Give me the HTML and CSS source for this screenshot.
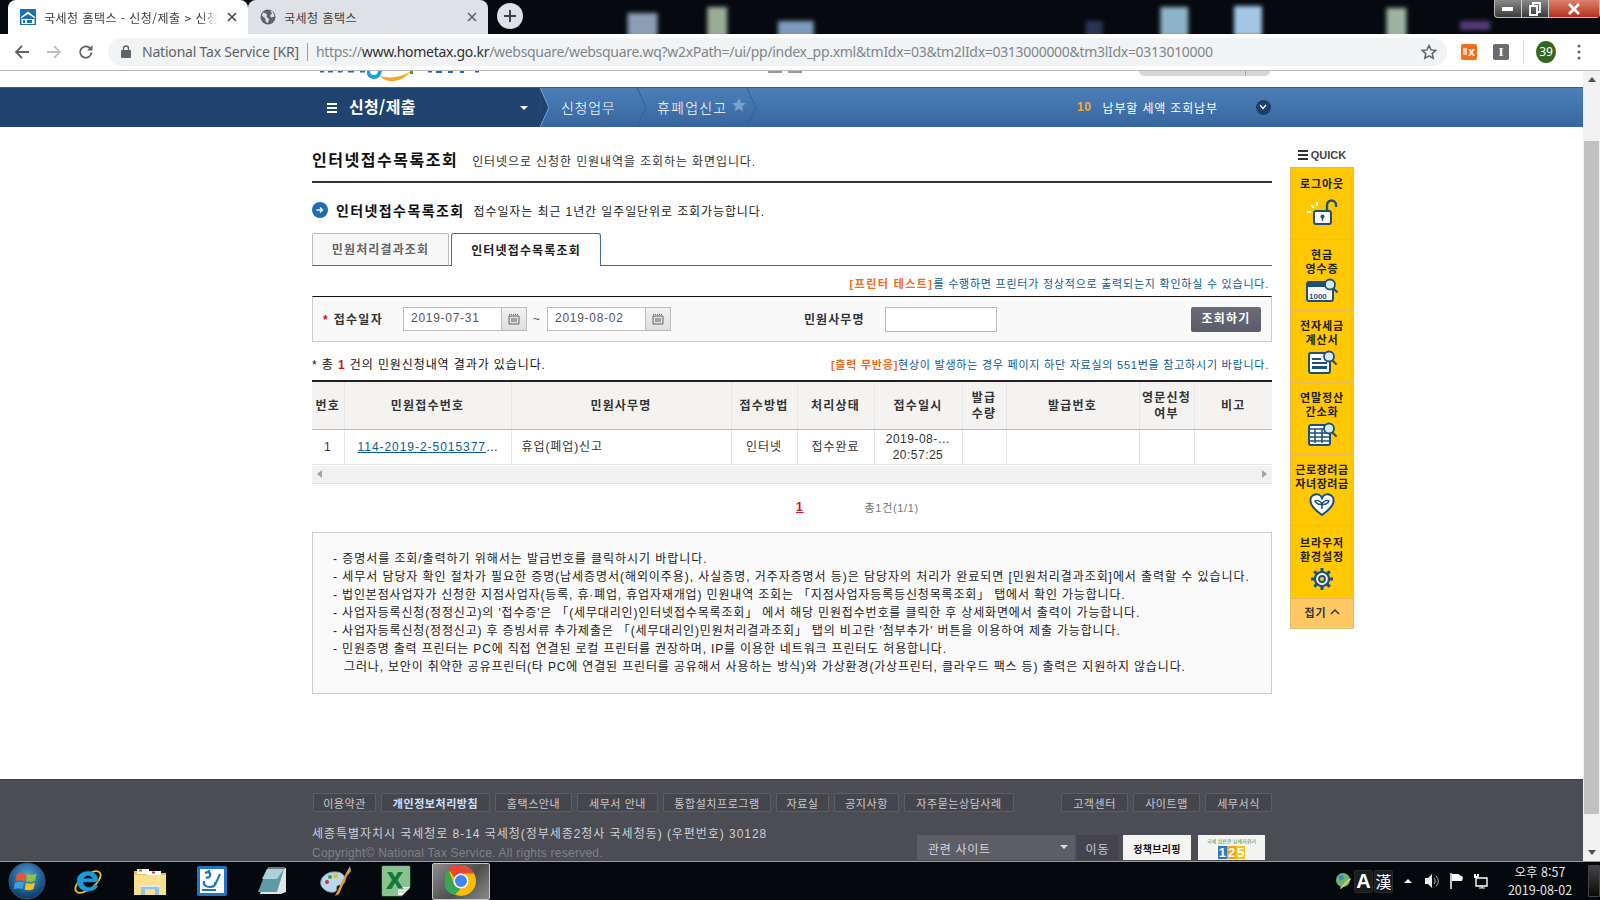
FILE: index.html
```html
<!DOCTYPE html>
<html lang="ko">
<head>
<meta charset="utf-8">
<title>국세청 홈택스 - 신청/제출</title>
<link rel="stylesheet" href="styles.css">
</head>
<body>
<header class="tabstrip">
  <div class="tab tab-active">
    <svg class="fav" viewBox="0 0 16 16"><rect width="16" height="16" fill="#1c6fb5"/><path d="M1 8 8 2.500 15 8v1.500L8 5 1 9.500z" fill="#fff"/><rect x="1.500" y="10" width="13" height="5" fill="#fff"/><rect x="3" y="11" width="2" height="3" fill="#1c6fb5"/><rect x="7" y="11" width="5" height="3" fill="#1c6fb5"/></svg>
    <span class="tab-title tab-fade">국세청 홈택스 - 신청/제출 &gt; 신청</span>
    <svg class="tab-x" viewBox="0 0 10 10"><path d="M1 1l8 8M9 1l-8 8" stroke="#45474a" stroke-width="1.600"/></svg>
  </div>
  <div class="tab tab-idle">
    <svg class="fav" viewBox="0 0 16 16"><circle cx="8" cy="8" r="7.500" fill="#5f6368"/><path d="M3 3.500 7 5 6.500 8 9 10l-1 4-2-1-1-4-3-2zM10 1.500l2 3-2 2 1 2 3.500-1L13 3z" fill="#dee1e6"/></svg>
    <span class="tab-title">국세청 홈택스</span>
    <svg class="tab-x" viewBox="0 0 10 10"><path d="M1 1l8 8M9 1l-8 8" stroke="#5f6368" stroke-width="1.600"/></svg>
  </div>
  <div class="newtab"><svg viewBox="0 0 14 14" width="14" height="14"><path d="M7 1v12M1 7h12" stroke="#3c4043" stroke-width="2"/></svg></div>
  <svg class="desktop" viewBox="0 0 975 34" preserveAspectRatio="none">
    <defs><filter id="bl" x="-30%" y="-30%" width="160%" height="160%"><feGaussianBlur stdDeviation="2.200"/></filter></defs>
    <g filter="url(#bl)">
      <rect x="105" y="13" width="30" height="24" fill="#8c9db6"/>
      <rect x="185" y="7" width="20" height="30" fill="#9aab96"/>
      <rect x="256" y="21" width="36" height="16" fill="#7f9cc0"/>
      <rect x="565" y="21" width="17" height="16" fill="#2c3455"/>
      <rect x="640" y="7" width="28" height="30" fill="#8db4c8"/>
      <rect x="714" y="6" width="28" height="30" fill="#a4c7e8"/>
      <rect x="867" y="8" width="20" height="30" fill="#9fb3a2"/>
      <rect x="941" y="21" width="30" height="9" fill="#553a7a"/>
    </g>
  </svg>
  <div class="winctl">
    <span class="wc"><svg viewBox="0 0 12 6" width="12" height="6"><rect width="11" height="4" y="1" fill="#fff"/></svg></span>
    <span class="wc"><svg viewBox="0 0 12 14" width="12" height="14"><path d="M1 4h7v9H1zM4 4V1h7v9H8" fill="none" stroke="#fff" stroke-width="1.800"/></svg></span>
    <span class="wc wc-close"><svg viewBox="0 0 12 12" width="12" height="12"><path d="M1 1l10 10M11 1 1 11" stroke="#fff" stroke-width="2.800"/></svg></span>
  </div>
</header>

<nav class="toolbar">
  <svg class="tb-ic" viewBox="0 0 16 16"><path d="M15 8H2M8 2 2 8l6 6" fill="none" stroke="#5f6368" stroke-width="1.800"/></svg>
  <svg class="tb-ic" viewBox="0 0 16 16"><path d="M1 8h13M8 2l6 6-6 6" fill="none" stroke="#bdc1c6" stroke-width="1.800"/></svg>
  <svg class="tb-ic" viewBox="0 0 16 16"><path d="M13.500 8.500A5.700 5.700 0 1 1 12 4.200" fill="none" stroke="#5f6368" stroke-width="1.800"/><path d="M14.500 1v5.500H9z" fill="#5f6368"/></svg>
  <div class="omni">
    <svg class="lock" viewBox="0 0 10 13"><path d="M2.500 5V3.500a2.500 2.500 0 0 1 5 0V5" fill="none" stroke="#5f6368" stroke-width="1.300"/><rect y="5" width="10" height="8" rx="1" fill="#5f6368"/></svg>
    <span class="site">National Tax Service [KR]</span>
    <i class="omni-sep"></i>
    <span class="url">https://<span class="url-host">www.hometax.go.kr</span>/websquare/websquare.wq?w2xPath=/ui/pp/index_pp.xml&amp;tmIdx=03&amp;tm2lIdx=0313000000&amp;tm3lIdx=0313010000</span>
    <svg class="omni-star" viewBox="0 0 16 16"><path d="M8 1.500l2 4.400 4.800.5-3.600 3.200 1 4.700L8 11.900l-4.200 2.400 1-4.700L1.200 6.400 6 5.900z" fill="none" stroke="#5f6368" stroke-width="1.500"/></svg>
  </div>
  <div class="ext ext-o"><i class="ext-bar"></i><b>x</b></div>
  <div class="ext ext-i">I</div>
  <i class="tb-sep"></i>
  <div class="avatar">39</div>
  <svg class="menu" viewBox="0 0 4 16"><circle cx="2" cy="2" r="1.500" fill="#5f6368"/><circle cx="2" cy="8" r="1.500" fill="#5f6368"/><circle cx="2" cy="14" r="1.500" fill="#5f6368"/></svg>
</nav>

<div class="viewport">
  <div class="page">
    <div class="logo-strip">
      <svg class="logo-cut" viewBox="0 0 170 16">
        <path d="M0 0h4v1.500H0zM8 0h5v1.500H8zM18 0h5l-1 1.500h-4zM28 0h6v1.500h-6zM40 0h5v1.500h-5zM108 0h4v1.500h-4zM116 0h6v2h-6zM128 0h5v2h-5zM140 0h4v2h-4zM155 0h4v1.500h-4z" fill="#1f6db3"/>
        <path d="M47 0c-1 5 3 8 7 8s7-3 8-8h-4c0 3-2 4-4 4s-4-1-4-4z" fill="#18a0d8"/>
        <path d="M60 5c6 8 22 7 31-5-9 6-20 8-31 5z" fill="#f6a623"/>
        <rect x="90" y="0" width="3" height="3" fill="#3ca33c"/>
      </svg>
      <span class="logo-mid"><i></i><i></i></span>
      <span class="logo-pill"><i></i></span>
    </div>
    <div class="gnb">
      <div class="gnb-cur">
        <span class="burger"><i></i><i></i><i></i></span>
        <strong>신청/제출</strong>
        <i class="caret"></i>
      </div>
      <svg class="chev" viewBox="0 0 10 40"><path d="M0 0 9 20 0 40z" fill="#20436f"/><path d="M0 0 9 20 0 40" fill="none" stroke="#7ba3d2"/></svg>
      <div class="crumb crumb-1">신청업무</div>
      <svg class="chev" viewBox="0 0 10 40"><path d="M0 0 9 20 0 40" fill="none" stroke="#2f5e99"/></svg>
      <div class="crumb crumb-2">휴폐업신고<svg viewBox="0 0 14 14" width="14" height="14"><path d="M7 0l2 4.800 5 .4-3.800 3.300 1.200 5L7 10.800l-4.400 2.700 1.200-5L0 5.200l5-.4z" fill="#7ba0cc"/></svg></div>
      <svg class="chev" viewBox="0 0 10 40"><path d="M0 0 9 20 0 40" fill="none" stroke="#2f5e99"/></svg>
      <div class="pay"><b>10</b><span>납부할 세액 조회납부</span><em><svg viewBox="0 0 8 6" width="8" height="6"><path d="M1 1l3 3.500L7 1" fill="none" stroke="#fff" stroke-width="1.200"/></svg></em></div>
    </div>

    <main class="layout">
      <section class="content">
        <div class="page-head"><h1>인터넷접수목록조회</h1><p>인터넷으로 신청한 민원내역을 조회하는 화면입니다.</p></div>
        <div class="sec-head">
          <svg class="sec-ic" viewBox="0 0 16 16"><circle cx="8" cy="8" r="8" fill="#1f6cb0"/><path d="M4.500 8h6M8 5.500 10.500 8 8 10.500" fill="none" stroke="#fff" stroke-width="1.400"/></svg>
          <h2>인터넷접수목록조회</h2><p>접수일자는 최근 1년간 일주일단위로 조회가능합니다.</p>
        </div>
        <div class="tabs"><span class="t t-off">민원처리결과조회</span><span class="t t-on">인터넷접수목록조회</span></div>
        <p class="hint hint-top"><b>[프린터 테스트]</b>를 수행하면 프린터가 정상적으로 출력되는지 확인하실 수 있습니다.</p>
        <form class="search">
          <label class="lb lb-date"><i>*</i> 접수일자</label>
          <span class="date">2019-07-31</span>
          <span class="cal"><svg viewBox="0 0 12 12" width="12" height="12"><path d="M1 3h10v8H1z" fill="#ddd" stroke="#666"/><path d="M1 1.500h10" stroke="#666" stroke-dasharray="1 1"/><path d="M3 6h6M3 8h6" stroke="#666"/></svg></span>
          <span class="tilde">~</span>
          <span class="date">2019-08-02</span>
          <span class="cal"><svg viewBox="0 0 12 12" width="12" height="12"><path d="M1 3h10v8H1z" fill="#ddd" stroke="#666"/><path d="M1 1.500h10" stroke="#666" stroke-dasharray="1 1"/><path d="M3 6h6M3 8h6" stroke="#666"/></svg></span>
          <label class="lb lb-name">민원사무명</label>
          <span class="name-in"></span>
          <span class="btn">조회하기</span>
        </form>
        <div class="result">
          <p>* 총 <b>1</b> 건의 민원신청내역 결과가 있습니다.</p>
          <p class="hint"><b>[출력 무반응]</b>현상이 발생하는 경우 페이지 하단 자료실의 551번을 참고하시기 바랍니다.</p>
        </div>
        <table class="grid">
          <colgroup><col class="c1"><col class="c2"><col class="c3"><col class="c4"><col class="c5"><col class="c6"><col class="c7"><col class="c8"><col class="c9"><col class="c10"></colgroup>
          <thead><tr><th>번호</th><th>민원접수번호</th><th>민원사무명</th><th>접수방법</th><th>처리상태</th><th>접수일시</th><th>발급<br>수량</th><th>발급번호</th><th>영문신청<br>여부</th><th>비고</th></tr></thead>
          <tbody><tr><td>1</td><td class="td-link"><a>114-2019-2-5015377</a>…</td><td class="td-left">휴업(폐업)신고</td><td>인터넷</td><td>접수완료</td><td class="td-date">2019-08-…<br>20:57:25</td><td></td><td></td><td></td><td></td></tr></tbody>
        </table>
        <div class="hscroll"><i class="ar ar-l"></i><i class="ar ar-r"></i></div>
        <div class="pager"><a>1</a><span>총1건(1/1)</span></div>
        <div class="notes">
          <p class="loose">- 증명서를 조회/출력하기 위해서는 발급번호를 클릭하시기 바랍니다.</p>
          <p class="loose">- 세무서 담당자 확인 절차가 필요한 증명(납세증명서(해외이주용), 사실증명, 거주자증명서 등)은 담당자의 처리가 완료되면 [민원처리결과조회]에서 출력할 수 있습니다.</p>
          <p>- 법인본점사업자가 신청한 지점사업자(등록, 휴·폐업, 휴업자재개업) 민원내역 조회는 「지점사업자등록등신청목록조회」 탭에서 확인 가능합니다.</p>
          <p>- 사업자등록신청(정정신고)의 '접수증'은 「(세무대리인)인터넷접수목록조회」 에서 해당 민원접수번호를 클릭한 후 상세화면에서 출력이 가능합니다.</p>
          <p>- 사업자등록신청(정정신고) 후 증빙서류 추가제출은 「(세무대리인)민원처리결과조회」 탭의 비고란 '첨부추가' 버튼을 이용하여 제출 가능합니다.</p>
          <p>- 민원증명 출력 프린터는 PC에 직접 연결된 로컬 프린터를 권장하며, IP를 이용한 네트워크 프린터도 허용합니다.</p>
          <p class="indent">그러나, 보안이 취약한 공유프린터(타 PC에 연결된 프린터를 공유해서 사용하는 방식)와 가상환경(가상프린터, 클라우드 팩스 등) 출력은 지원하지 않습니다.</p>
        </div>
      </section>

      <aside class="quick">
        <div class="quick-h"><span class="burger burger-d"><i></i><i></i><i></i></span>QUICK</div>
        <div class="q q-first"><span>로그아웃</span>
          <svg viewBox="0 0 32 26" width="32" height="26"><path d="M1 13h4M5 6l3 3M11 3v4" stroke="#fff" stroke-width="2"/><path d="M21 12V6a4.500 4.500 0 0 1 9 0v2" fill="none" stroke="#1c4f7c" stroke-width="2.400"/><rect x="8" y="12" width="17" height="13" rx="2" fill="#fff" stroke="#1c4f7c" stroke-width="2"/><circle cx="16.500" cy="17.500" r="2" fill="#1c4f7c"/><path d="M16.500 18v4" stroke="#1c4f7c" stroke-width="1.400"/></svg>
        </div>
        <div class="q"><span>현금<br>영수증</span>
          <svg viewBox="0 0 32 24" width="32" height="24"><rect x="1" y="4" width="26" height="19" rx="2" fill="#fff" stroke="#1c4f7c" stroke-width="2"/><rect x="1" y="4" width="26" height="5" fill="#1c4f7c"/><text x="3" y="20.500" class="svgt">1000</text><circle cx="24" cy="6.500" r="5" fill="#dbe9f3" stroke="#1c4f7c" stroke-width="1.800"/><path d="M27.500 10.500l4 4" stroke="#1c4f7c" stroke-width="2"/></svg>
        </div>
        <div class="q"><span>전자세금<br>계산서</span>
          <svg viewBox="0 0 32 24" width="32" height="24"><rect x="3" y="3" width="21" height="20" rx="2" fill="#fff" stroke="#1c4f7c" stroke-width="2"/><path d="M6 8h9v2H6zM6 12h15v2H6zM6 16h15v3H6z" fill="#1c4f7c"/><circle cx="23" cy="6.500" r="5" fill="#dbe9f3" stroke="#1c4f7c" stroke-width="1.800"/><path d="M26.500 10.500l4 4" stroke="#1c4f7c" stroke-width="2"/></svg>
        </div>
        <div class="q"><span>연말정산<br>간소화</span>
          <svg viewBox="0 0 32 24" width="32" height="24"><rect x="3" y="3" width="21" height="20" rx="2" fill="#fff" stroke="#1c4f7c" stroke-width="2"/><path d="M3 7h21M3 11h21M3 15h21M3 19h21M9 7v14M16 7v14" stroke="#1c4f7c" stroke-width="1.500"/><circle cx="23" cy="6.500" r="5" fill="#dbe9f3" stroke="#1c4f7c" stroke-width="1.800"/><path d="M26.500 10.500l4 4" stroke="#1c4f7c" stroke-width="2"/></svg>
        </div>
        <div class="q"><span class="wide">근로장려금<br>자녀장려금</span>
          <svg viewBox="0 0 26 24" width="26" height="24"><path d="M13 22C6 17 1.500 13 1.500 8A6 6 0 0 1 13 5a6 6 0 0 1 11.500 3c0 5-4.500 9-11.500 14z" fill="#fff" stroke="#1c4f7c" stroke-width="2"/><path d="M13 16V9M13 11C11 7 7 7 6 8c1 3 5 4 7 3zM13 11c2-4 6-4 7-3-1 3-5 4-7 3z" fill="none" stroke="#1c4f7c" stroke-width="1.500"/></svg>
        </div>
        <div class="q q-last"><span>브라우저<br>환경설정</span>
          <svg viewBox="0 0 24 24" width="24" height="24"><circle cx="12" cy="12" r="7" fill="#fff" stroke="#1c4f7c" stroke-width="2.200"/><circle cx="12" cy="12" r="3" fill="#ffc800" stroke="#1c4f7c" stroke-width="1.800"/><path d="M12 1v5M12 18v5M1 12h5M18 12h5M4.200 4.200l3.500 3.500M16.300 16.300l3.500 3.500M4.200 19.800l3.500-3.500M16.300 7.700l3.500-3.500" stroke="#1c4f7c" stroke-width="3"/></svg>
        </div>
        <div class="q-fold">접기 <svg viewBox="0 0 10 6" width="10" height="6"><path d="M1 5l4-4 4 4" fill="none" stroke="#333" stroke-width="1.400"/></svg></div>
      </aside>
    </main>

    <footer class="foot">
      <div class="foot-links">
        <a>이용약관</a><a class="hl">개인정보처리방침</a><a>홈택스안내</a><a>세무서 안내</a><a>통합설치프로그램</a><a>자료실</a><a>공지사항</a><a>자주묻는상담사례</a><i></i><a>고객센터</a><a>사이트맵</a><a>세무서식</a>
      </div>
      <div class="foot-row">
        <div class="foot-txt">
          <p>세종특별자치시 국세청로 8-14 국세청(정부세종2청사 국세청동) (우편번호) 30128</p>
          <p class="copy">Copyright© National Tax Service.  All rights reserved.</p>
        </div>
        <div class="foot-r">
          <span class="sel">관련 사이트<i class="caret caret-g"></i></span>
          <span class="go">이동</span>
          <span class="ban ban-1">정책브리핑</span>
          <span class="ban ban-2"><small>국세 심판관·납세자권리</small><b><u>1</u><u>2</u><u>5</u></b></span>
        </div>
      </div>
    </footer>
  </div>
  <div class="vscroll">
    <i class="vs-up"></i>
    <div class="vs-track"><i class="vs-thumb"></i></div>
    <i class="vs-down"></i>
  </div>
</div>

<footer class="taskbar">
  <span class="tk tk-orb"><svg viewBox="0 0 38 38" width="38" height="38"><defs><radialGradient id="orb" cx=".5" cy=".35" r=".7"><stop offset="0" stop-color="#5f9fd0"/><stop offset=".6" stop-color="#1d5f95"/><stop offset="1" stop-color="#0b2c4c"/></radialGradient></defs><circle cx="19" cy="19" r="18" fill="url(#orb)" stroke="#3a5a70"/><path d="M9 12c3-2 6-1 9 0l-1.500 7c-3-1-5-1-9 0z" fill="#e8562e"/><path d="M19.500 12c3 1 6 1 9-.5L27 18.500c-3 1.500-6 1.500-9 .5z" fill="#8cc63f"/><path d="M7 20.500c3-1 6-1 9 0L14.500 27c-3-1-6-1-9 .5z" fill="#3ca0e0"/><path d="M18 21c3 1 6 1 9-.5L25.500 27c-3 1.500-6 1.500-9 .5z" fill="#f7c21b"/></svg></span>
  <span class="tk"><svg viewBox="0 0 32 32" width="32" height="32"><ellipse cx="15" cy="17" rx="15" ry="7" transform="rotate(-38 15 17)" fill="none" stroke="#f5c518" stroke-width="1.800"/><path d="M25 17H10c.5 6 8 7 12 3l3 1c-4 8-21 7-21-5 0-11 16-13 20-5 1 2 1 4 1 6zM10.500 13.500h9c-1-4-8-4-9 0z" fill="#1e9ae0" stroke="#0e6eb5" stroke-width=".6"/></svg></span>
  <span class="tk"><svg viewBox="0 0 34 32" width="34" height="32"><path d="M1 6h10l2 2h20v22H1z" fill="#e6c35c"/><rect x="4" y="4" width="12" height="5" fill="#fff"/><rect x="6" y="4.500" width="3" height="2" fill="#3ca33c"/><rect x="14" y="6" width="14" height="4" fill="#fff"/><rect x="19" y="6.500" width="3" height="2" fill="#c33"/><path d="M1 10h32v20H1z" fill="#f7e18e"/><path d="M8 30V20h18v10h-4v-6H12v6z" fill="#8ec4e6"/><path d="M7 20h20v2H7z" fill="#d2ecf9"/></svg></span>
  <span class="tk"><svg viewBox="0 0 30 30" width="30" height="30"><rect width="30" height="30" rx="2" fill="#1f74c4"/><rect x="3" y="3" width="24" height="24" fill="#fff"/><path d="M8 7c4-2 6 0 5 3-1 2-3 2-4 1M7 15c-1 4 2 6 6 6s6-2 5-5M5 24h14M12 4v3" fill="none" stroke="#1f74c4" stroke-width="2.200"/><path d="M23 8l-5 11" stroke="#1f74c4" stroke-width="2"/></svg></span>
  <span class="tk"><svg viewBox="0 0 32 32" width="32" height="32"><path d="M11 3h18v24l-5 2H3z" fill="#dfe6e6"/><path d="M10 4h17L20 27H1z" fill="#5d9aa6"/><path d="M11 2h17v2H11z" fill="#777" stroke-dasharray="1 1"/><path d="M10 4h17l-7 10H5z" fill="#a8d3da"/></svg></span>
  <span class="tk"><svg viewBox="0 0 34 34" width="34" height="34"><path d="M3 21C1 13 10 7 18 8c8 0 11 7 8 11-2 3-5 1-7 3-1 2 1 5-3 6-5 1-11-2-13-7z" fill="#b9d7ec" stroke="#7aa5c4"/><circle cx="9" cy="18" r="2" fill="#c33"/><circle cx="12" cy="13" r="2" fill="#3ca33c"/><circle cx="18" cy="12" r="2.200" fill="#f2b705"/><path d="M17 32 28 9l2 1-9 20z" fill="#e8952c"/><path d="M28 9l4-7 1 5-3 4z" fill="#c9a060"/></svg></span>
  <span class="tk"><svg viewBox="0 0 30 32" width="30" height="32"><path d="M1 1h28v22l-8 8H1z" fill="#fff" stroke="#1d7040"/><path d="M2 2h26v20H17v8H2z" fill="#8ac28f"/><path d="M6 7h5l3 5 3-5h5l-5.500 8 6 9h-5l-3.500-6-3.500 6H5l6-9z" fill="#137a3a"/><path d="M18 24h10M18 27h7" stroke="#8ac28f"/></svg></span>
  <span class="tk tk-chrome"><svg viewBox="0 0 32 32" width="32" height="32"><circle cx="16" cy="16" r="15" fill="#fbbc05"/><path d="M16 1a15 15 0 0 1 13 7.500H16a7.500 7.500 0 0 0-6.500 3.750L3 3.500A15 15 0 0 1 16 1z" fill="#ea4335"/><path d="M3 4.500 9.500 19.750a7.500 7.500 0 0 0 6.500 3.750L9.500 30A15 15 0 0 1 3 4.500z" fill="#34a853"/><circle cx="16" cy="16" r="7.500" fill="#fff"/><circle cx="16" cy="16" r="6" fill="#4285f4"/></svg></span>
  <div class="tray">
    <svg class="tr-globe" viewBox="0 0 16 16" width="16" height="16"><circle cx="8" cy="7" r="7" fill="#6bb76b"/><path d="M3 3l5-1 1 4-4 2z" fill="#3f87c4"/><path d="M5 15 15 5l1 1L6 16z" fill="#f5d76e"/></svg>
    <span class="ime">A</span><span class="ime ime-k">漢</span>
    <i class="tr-up"></i>
    <svg class="tr-ic" viewBox="0 0 16 16" width="16" height="16"><path d="M1 5h3l4-4v14l-4-4H1z" fill="#eee"/><path d="M10 5c1.500 1.500 1.500 4.500 0 6M12 3c3 3 3 7 0 10" fill="none" stroke="#bbb"/></svg>
    <svg class="tr-ic tr-flag" viewBox="0 0 16 16" width="16" height="16"><path d="M2 0v16" stroke="#fff" stroke-width="1.500"/><path d="M3 1h6l5 3-1 4H3z" fill="#fff"/></svg>
    <svg class="tr-ic tr-net" viewBox="0 0 16 16" width="16" height="16"><path d="M3 5h11v8H3z" fill="none" stroke="#fff" stroke-width="1.400"/><path d="M6 15h6M9 13v2" stroke="#fff"/><path d="M1 5h5V1H4v2H3V1H1z" fill="#fff"/></svg>
    <div class="clock"><span>오후 8:57</span><span>2019-08-02</span></div>
    <i class="showdesk"></i>
  </div>
</footer>
</body>
</html>
```

FILE: styles.css
```css
* { box-sizing: border-box; }
html, body { margin: 0; padding: 0; }
body {
  width: 1600px; height: 900px; overflow: hidden;
  display: flex; flex-direction: column;
  font-family: "Liberation Sans", "Noto Sans CJK KR", sans-serif;
  font-size: 12px; color: #222; background: #fff;
  letter-spacing: .075em;
}
p, h1, h2 { margin: 0; }
i, em { font-style: normal; }

/* browser chrome */
.tabstrip { height: 34px; flex: none; display: flex; background: #060a10; padding-left: 8px; letter-spacing: .04em; }
.tab { width: 240px; height: 34px; display: flex; align-items: center; padding: 0 11px 0 12px; border-radius: 8px 8px 0 0; font-family: "Noto Sans CJK KR", sans-serif; color: #3c4043; }
.tab-active { background: #fff; }
.tab-idle { background: #dee1e6; }
.fav { width: 16px; height: 16px; flex: none; margin-right: 8px; }
.tab-title { flex: 1; white-space: nowrap; overflow: hidden; }
.tab-fade { -webkit-mask-image: linear-gradient(90deg, #000 88%, transparent 97%); mask-image: linear-gradient(90deg, #000 88%, transparent 97%); }
.tab-x { width: 10px; height: 10px; flex: none; margin-left: 4px; }
.newtab { width: 26px; height: 26px; margin: 3px 0 0 9px; flex: none; border-radius: 50%; background: #dee1e6; display: flex; align-items: center; justify-content: center; }
.desktop { flex: 1; height: 34px; min-width: 0; }
.winctl { flex: none; width: 106px; height: 18px; display: flex; border: 1px solid #bbb; border-top: 0; border-radius: 0 0 4px 4px; background: linear-gradient(#8a8a8a, #3a3a3a); }
.wc { width: 27px; display: flex; align-items: center; justify-content: center; border-right: 1px solid #ccc; }
.wc-close { flex: 1; border: 0; background: linear-gradient(#d9826f, #b8301c); }

.toolbar { height: 37px; flex: none; display: flex; align-items: center; background: #fff; border-bottom: 1px solid #b9b9b9; padding-bottom: 1px; letter-spacing: 0; }
.tb-ic { width: 16px; height: 16px; flex: none; margin-left: 14px; margin-right: 1px; }
.tb-ic:nth-child(2) { margin-left: 15px; }
.tb-ic:nth-child(3) { margin-left: 15px; }
.omni { width: 1339px; height: 28px; margin-left: 13px; border-radius: 14px; background: #f1f3f4; display: flex; align-items: center; padding-left: 13px; font-family: "Noto Sans", sans-serif; font-size: 14px; color: #5f6368; }
.lock { width: 10px; height: 13px; flex: none; margin-right: 11px; }
.site { white-space: nowrap; letter-spacing: -.2px; }
.omni-sep { width: 1px; height: 18px; background: #9aa0a6; margin: 0 8px 0 8px; }
.url { white-space: nowrap; color: #80868b; flex: 1; letter-spacing: -.3px; }
.url-host { color: #303134; }
.omni-star { width: 16px; height: 16px; flex: none; margin-right: 10px; }
.ext { width: 16px; height: 16px; flex: none; border-radius: 2px; display: flex; align-items: center; justify-content: center; }
.ext-o { margin-left: 14px; background: #f4701f; color: #fff; font-size: 12px; line-height: 16px; }
.ext-bar { width: 4px; height: 7px; margin-right: 1px; background: #ffc9a0; display: block; }
.ext-i { margin-left: 16px; background: #6b6b6b; color: #fff; font-family: "Liberation Serif", serif; font-weight: 700; font-size: 13px; }
.tb-sep { width: 1px; height: 24px; background: #dadce0; margin-left: 14px; }
.avatar { width: 20px; height: 22px; margin-left: 12px; border-radius: 50%; background: #33691e; color: #fff; font-size: 12px; display: flex; align-items: center; justify-content: center; font-family: "Noto Sans", sans-serif; }
.menu { width: 4px; height: 16px; flex: none; margin-left: 21px; }

/* page */
.viewport { height: 790px; flex: none; display: flex; }
.page { width: 1583px; height: 790px; flex: none; display: flex; flex-direction: column; overflow: hidden; background: #fff; }
.vscroll { width: 17px; flex: none; display: flex; flex-direction: column; align-items: center; background: #f1f1f1; }
.vs-up, .vs-down { width: 17px; height: 17px; flex: none; display: flex; align-items: center; justify-content: center; }
.vs-up::after { content: ""; border: 4px solid transparent; border-bottom: 5px solid #505050; border-top: 0; }
.vs-down::after { content: ""; border: 4px solid transparent; border-top: 5px solid #505050; border-bottom: 0; }
.vs-track { flex: 1; width: 100%; padding-top: 53px; padding-bottom: 30px; display: flex; justify-content: center; }
.vs-thumb { width: 15px; background: #c1c1c1; display: block; }

.logo-strip { height: 16px; flex: none; padding-left: 320px; display: flex; }
.logo-cut { width: 170px; height: 16px; flex: none; }
.logo-mid { display: flex; gap: 6px; margin-left: 278px; }
.logo-mid i { width: 14px; height: 2px; background: #999; }
.logo-pill { width: 131px; height: 5px; margin-left: 337px; background: #d6d6d6; border-radius: 0 0 8px 8px; display: flex; justify-content: flex-end; }
.logo-pill i { width: 1px; background: #aaa; margin-right: 24px; }

.gnb { height: 40px; flex: none; display: flex; color: #fff; font-family: "Noto Sans CJK KR", sans-serif; background: linear-gradient(#4b7fb9, #38669f); letter-spacing: .06em; border-top: 1px solid #3b5f8c; }
.gnb-cur { width: 540px; flex: none; display: flex; align-items: center; padding-left: 327px; background: #20436f; }
.gnb-cur strong { font-size: 16px; font-weight: 700; margin-left: 12px; padding-bottom: 3px; letter-spacing: .02em; }
.burger { width: 10px; display: flex; flex-direction: column; gap: 2px; }
.burger i { height: 2px; background: #fff; display: block; }
.gnb-cur .caret { margin-left: auto; margin-right: 12px; }
.caret { width: 0; height: 0; border: 4px solid transparent; border-top: 4px solid #fff; border-bottom: 0; display: block; }
.chev { width: 10px; height: 39px; flex: none; }
.crumb { font-size: 14px; display: flex; align-items: center; font-weight: 300; padding-bottom: 2px; }
.crumb-1 { width: 87px; padding-left: 11px; }
.crumb-2 { width: 100px; padding-left: 10px; white-space: nowrap; letter-spacing: .085em; }
.crumb-2 svg { flex: none; margin-left: 5px; margin-bottom: 3px; }
.pay { flex: 1; display: flex; align-items: center; padding-left: 320px; font-size: 12px; padding-bottom: 1px; }
.pay b { color: #f7a736; font-family: "Liberation Sans", sans-serif; margin-right: 11px; letter-spacing: .05em; }
.pay span { letter-spacing: .07em; }
.pay em { width: 15px; height: 15px; margin-left: 38px; border-radius: 50%; background: #1f3f68; display: flex; align-items: center; justify-content: center; }

.layout { display: flex; padding-left: 312px; flex: none; }
.content { width: 960px; flex: none; }
.page-head { height: 56px; padding: 20px 0 11px; display: flex; align-items: center; border-bottom: 2px solid #333; }
.page-head h1 { font-size: 16px; font-weight: 700; color: #111; letter-spacing: .095em; margin-right: 14px; }
.page-head p { color: #333; padding-top: 3px; }
.sec-head { height: 26px; margin-top: 14px; display: flex; align-items: center; }
.sec-ic { width: 16px; height: 16px; flex: none; margin-right: 8px; }
.sec-head h2 { font-size: 14px; font-weight: 700; color: #111; letter-spacing: .1em; margin-right: 9px; }
.tabs { height: 33px; margin-top: 10px; display: flex; border-bottom: 1px solid #3f6fa8; font-weight: 700; letter-spacing: .095em; }
.t { display: flex; align-items: center; justify-content: center; height: 33px; padding-bottom: 2px; }
.t-off { width: 137px; background: #f7f7f7; color: #666; border: 1px solid #bbb; border-bottom: 1px solid #3f6fa8; border-radius: 2px 2px 0 0; }
.t-on { width: 150px; margin-left: 2px; background: #fff; color: #222; border: 1px solid #3f6fa8; border-bottom: 0; border-radius: 3px 3px 0 0; }
.hint { color: #0b5a93; text-align: right; padding-right: 3px; font-size: 11px; letter-spacing: .07em; }
.hint b { color: #ed6c1f; }
.hint-top b { letter-spacing: .13em; }
.hint-top { height: 30px; padding-top: 11px; line-height: 14px; }
.search { height: 46px; margin: 0; display: flex; align-items: center; background: #f9f9f9; border: 1px solid #ccc; border-top: 1px solid #111; }
.lb { font-weight: 700; color: #333; letter-spacing: .11em; padding-bottom: 2px; }
.lb i { color: #d0112b; }
.lb-date { width: 90px; padding-left: 10px; }
.date { width: 99px; height: 24px; background: #fff; border: 1px solid #bbb; color: #555; line-height: 21px; padding-left: 7px; letter-spacing: .06em; }
.cal { width: 25px; height: 24px; background: linear-gradient(#f2f2f2, #dedede); border: 1px solid #bbb; border-left: 0; display: flex; align-items: center; justify-content: center; }
.tilde { width: 20px; text-align: center; color: #555; }
.lb-name { width: 81px; margin-left: 133px; letter-spacing: .09em; }
.name-in { width: 112px; height: 25px; background: #fff; border: 1px solid #bbb; }
.btn { width: 70px; height: 25px; margin-left: 194px; border-radius: 2px; background: linear-gradient(#6a6d78, #5a5d68); color: #fff; font-weight: 700; display: flex; align-items: center; justify-content: center; letter-spacing: .1em; padding-bottom: 3px; }
.result { height: 38px; padding-top: 15px; line-height: 16px; display: flex; justify-content: space-between; }
.result b { color: #d0112b; }
.result .hint b { color: #ed6c1f; }
.result p:first-child { color: #111; }
.grid { width: 960px; table-layout: fixed; border-collapse: collapse; border-top: 2px solid #222; }
.c1 { width: 32px; } .c2 { width: 167px; } .c3 { width: 220px; } .c4 { width: 66px; } .c5 { width: 77px; }
.c6 { width: 88px; } .c7 { width: 44px; } .c8 { width: 133px; } .c9 { width: 55px; } .c10 { width: 78px; }
.grid th { height: 48px; background: #f4f3f2; font-weight: 700; color: #333; border-bottom: 1px solid #bbb; border-left: 1px solid #e6e6e6; padding: 2px 0 0; line-height: 16px; letter-spacing: .1em; }
.grid th:first-child, .grid td:first-child { border-left: 0; }
.grid td { height: 35px; text-align: center; color: #333; border-bottom: 1px solid #e5e5e5; border-left: 1px solid #e6e6e6; padding: 0; line-height: 16px; }
.grid .td-left { text-align: left; padding-left: 10px; }
.grid .td-link { text-align: left; padding-left: 13px; white-space: nowrap; overflow: hidden; }
.td-link a { color: #0b5a93; text-decoration: underline; letter-spacing: .08em; }
.grid .td-date { letter-spacing: .04em; }
.hscroll { height: 18px; margin-top: 1px; background: #f1f1f1; border-bottom: 1px solid #e2e2e2; display: flex; justify-content: space-between; align-items: center; padding: 0 5px; }
.ar { width: 0; height: 0; border: 4px solid transparent; display: block; }
.ar-l { border-right: 5px solid #a3a3a3; border-left: 0; }
.ar-r { border-left: 5px solid #a3a3a3; border-right: 0; }
.pager { height: 48px; display: flex; align-items: center; padding-left: 484px; padding-bottom: 2px; }
.pager a { color: #d0112b; font-weight: 700; text-decoration: underline; }
.pager span { margin-left: 61px; color: #777; font-size: 11px; letter-spacing: .06em; }
.notes { height: 162px; padding: 17px 0 0 20px; background: #fafafa; border: 1px solid #ccc; line-height: 18px; color: #222; white-space: nowrap; letter-spacing: .07em; }
.notes .loose { letter-spacing: .078em; }
.notes .indent { padding-left: 11px; }

.quick { width: 64px; flex: none; margin-left: 18px; padding-top: 18px; display: flex; flex-direction: column; }
.quick-h { height: 22px; padding-bottom: 2px; display: flex; align-items: center; justify-content: center; font-weight: 700; font-size: 11px; color: #444; letter-spacing: 0; gap: 3px; }
.burger-d i { background: #333; }
.q { height: 71.700px; flex: none; background: #ffc800; border: 1px solid #e2b860; border-bottom: 0; display: flex; flex-direction: column; align-items: center; padding-top: 8px; font-weight: 700; font-size: 11px; line-height: 14px; text-align: center; color: #222; letter-spacing: .08em; }
.q .wide { letter-spacing: .05em; }
.q svg { margin-top: auto; margin-bottom: 8px; flex: none; }
.q-first { padding-top: 9px; }
.q-first svg { margin-bottom: 14px; }
.q-last { height: 72.700px; padding-top: 10px; }
.q-last svg { margin-bottom: 7px; }
.svgt { font: 700 8px "Liberation Sans", sans-serif; fill: #1c4f7c; letter-spacing: 0; }
.q-fold { height: 31px; flex: none; padding-bottom: 4px; background: #ffc864; border: 1px solid #e2b860; border-bottom: 1px solid #c8cc70; display: flex; align-items: center; justify-content: center; gap: 3px; font-weight: 700; font-size: 11px; color: #333; }

/* footer */
.foot { margin-top: auto; height: 82px; flex: none; overflow: hidden; background: #4b4c54; border-top: 1px solid #3e3f46; padding: 13px 0 0 312px; color: #ddd; }
.foot-links { width: 960px; padding-left: 1px; display: grid; grid-template-columns: 63px 109px 77px 81px 108px 53px 65px 110px 37px 67px 67px 67px; gap: 5px; }
.foot-links a { height: 19px; display: flex; align-items: center; justify-content: center; background: #45464d; border: 1px solid #5c5d65; color: #c8c8cc; font-size: 11px; letter-spacing: .05em; white-space: nowrap; border-radius: 1px; }
.foot-links .hl { color: #cfe0ff; font-weight: 700; letter-spacing: .05em; }
.foot-row { width: 960px; display: flex; justify-content: space-between; padding-right: 7px; }
.foot-txt { padding-top: 15px; line-height: 14px; color: #d0d0d4; letter-spacing: .08em; }
.foot-txt .copy { margin-top: 5px; color: #80818a; letter-spacing: .02em; }
.foot-r { display: flex; margin-top: 23px; height: 25px; font-size: 12px; }
.sel { width: 158px; height: 25px; background: #5c5d65; padding: 5px 7px 0 11px; display: flex; justify-content: space-between; color: #d8d8dc; letter-spacing: .06em; }
.caret-g { margin-top: 5px; border-top-color: #ddd; }
.go { width: 41px; height: 25px; margin-left: 2px; background: #44454c; color: #ccc; text-align: center; padding-top: 5px; }
.ban { height: 25px; background: #f4f4f2; color: #111; }
.ban-1 { width: 68px; margin-left: 5px; font-weight: 700; font-size: 10px; letter-spacing: .03em; text-align: center; padding-top: 6px; }
.ban-2 { width: 67px; margin-left: 7px; text-align: center; display: flex; flex-direction: column; align-items: center; }
.ban-2 small { font-size: 5px; color: #3a8a3a; letter-spacing: 0; white-space: nowrap; line-height: 8px; padding-top: 2px; }
.ban-2 b { font-size: 13px; line-height: 13px; display: flex; letter-spacing: 0; margin-top: 1px; }
.ban-2 u { text-decoration: none; color: #fff; background: #2f79c4; padding: 0 1px; }
.ban-2 u:nth-child(2) { background: #f2a31c; }
.ban-2 u:nth-child(3) { background: #f5c518; }

.taskbar { height: 39px; flex: none; display: flex; align-items: center; background: #05080c; border-top: 1px solid #9a9a9e; letter-spacing: 0; }
.tk { width: 61.500px; height: 37px; flex: none; display: flex; align-items: center; justify-content: center; }
.tk-orb { width: 54px; margin-right: 4px; }
.tk-chrome { width: 58px; margin-left: 5px; background: linear-gradient(135deg, #8c8c8c, #4e4e4e 55%, #8c8c8c); border: 1px solid #c8c8c8; border-radius: 2px; }
.tray { flex: 1; display: flex; align-items: center; color: #fff; padding-left: 845px; }
.tr-globe { flex: none; }
.ime { width: 19px; height: 23px; margin-left: 3px; border: 1px solid #2a2a2a; border-radius: 2px; background: #1a1d20; font: 700 20px/21px "Liberation Sans", sans-serif; text-align: center; }
.ime-k { font: 400 16px/21px "Noto Sans CJK KR", sans-serif; margin-left: 1px; }
.tr-up { width: 0; height: 0; margin-left: 11px; border: 4px solid transparent; border-bottom: 4px solid #fff; border-top: 0; display: block; }
.tr-ic { flex: none; margin-left: 12px; }
.tr-flag { margin-left: 9px; }
.tr-net { margin-left: 8px; }
.clock { width: 86px; margin-left: 8px; display: flex; flex-direction: column; align-items: center; font-family: "Noto Sans CJK KR", sans-serif; font-size: 12.500px; line-height: 18px; color: #e6e6e6; }
.showdesk { width: 12px; height: 32px; margin-left: 5px; border: 1px solid #444; background: linear-gradient(#444, #0a0a0a); border-radius: 1px; display: block; flex: none; }
```
